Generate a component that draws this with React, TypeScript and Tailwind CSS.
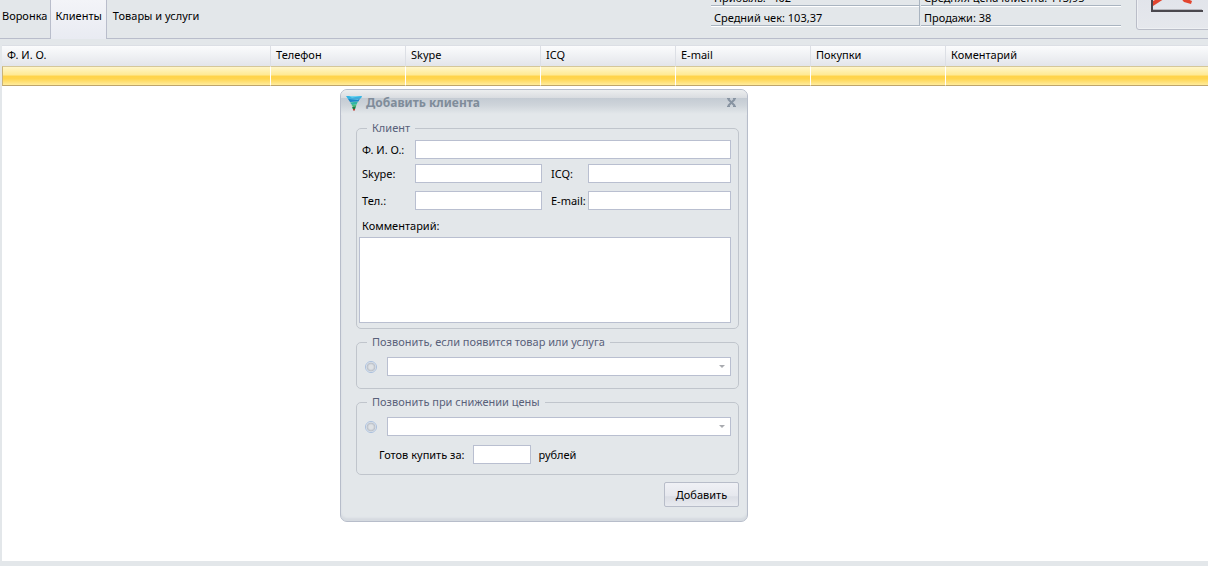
import { useState } from "react";
import type { ReactNode } from "react";

const tabs = ["Воронка", "Клиенты", "Товары и услуги"];

const columns = ["Ф. И. О.", "Телефон", "Skype", "ICQ", "E-mail", "Покупки", "Коментарий"];

const stats = [
  ["Прибыль: -402", "Средняя цена клиента: 113,95"],
  ["Средний чек: 103,37", "Продажи: 38"],
];

const inputClass = "h-[19px] min-w-0 border border-[#b9bfd0] bg-white px-1 outline-none";

function FunnelLogo() {
  return (
    <svg width="16" height="16" viewBox="0 0 16 16" aria-hidden="true">
      <path d="M0 1h16l-1 2.500L2 4z" fill="#35b4e2" />
      <path d="M3 1.200h12l-9 1.300z" fill="#8adcf2" />
      <path d="M2 4l12-.5-1.500 3L4 7z" fill="#1c86c8" />
      <path d="M3 4.800 13 4l-1 1z" fill="#5cc4e6" />
      <path d="M4 7.500l8-1-1.500 3L6 10z" fill="#2fb5a5" />
      <path d="M5.500 10.200 10.500 9.500 10 11.500l-3 .5z" fill="#46c07a" />
      <path d="M6 12.200l4-1-1 3H7z" fill="#1f7d45" />
      <path d="M7 14h2v1.500H7z" fill="#c0392f" />
    </svg>
  );
}

function ChartIcon() {
  return (
    <svg width="54" height="54" viewBox="0 0 54 54" aria-hidden="true">
      <path d="M3 51.500h49" stroke="#b5b6bc" />
      <path d="M2 0v53h51" fill="none" stroke="#4b484e" strokeWidth="2" />
      <path d="M3 43 17 36v3L3 48z" fill="#e2452f" />
      <path d="M28 37l14 6-1 3-7-2z" fill="#e2452f" />
    </svg>
  );
}

function Group({ title, children }: { title: string; children: ReactNode }) {
  return (
    <fieldset className="min-w-0 rounded-[5px] border border-[#c0c5cc]">
      <legend className="ml-[10px] px-[5px] leading-[14px] text-[#59617a]">{title}</legend>
      {children}
    </fieldset>
  );
}

function ProductPicker({ name, label }: { name: string; label: string }) {
  return (
    <div className="flex items-center gap-[10px] pl-2 pr-[7px] pt-2">
      <input
        type="radio"
        name="reminder"
        value={name}
        aria-label={label}
        className="size-3 shrink-0 appearance-none rounded-full border border-[#a9bfdd] bg-[radial-gradient(circle,#dfe2e5_0_2px,#b9bfc8_4px,#f1f4f7_5px)]"
      />
      <div className="relative flex grow">
        <select aria-label={label} className={`${inputClass} w-full appearance-none`}>
          <option></option>
        </select>
        <svg
          className="pointer-events-none absolute right-[6px] top-2"
          width="6"
          height="3"
          viewBox="0 0 6 3"
          aria-hidden="true"
        >
          <path d="M0 0h6L3 3z" fill="#a9abb0" />
        </svg>
      </div>
    </div>
  );
}

function AddClientDialog() {
  return (
    <section
      role="dialog"
      aria-labelledby="dialog-title"
      className="absolute left-[340px] top-[89px] w-[408px] rounded-[7px] border border-[#b7bdca] bg-[#e3e7ea] shadow-[inset_0_-3px_2px_#d5dae0]"
    >
      <header className="flex h-[25px] items-center gap-1 rounded-t-[6px] bg-[linear-gradient(#eceeef_0,#d9dce0_8px,#c4cbd3_8px,#ced4da_15px,#e3e7ea_24px)] pl-[5px] pr-[10px]">
        <FunnelLogo />
        <h2 id="dialog-title" className="grow text-[12px] leading-[14px] font-bold text-[#7f8c9a]">
          Добавить клиента
        </h2>
        <button type="button" aria-label="Закрыть">
          <svg width="11" height="9" viewBox="0 0 11 9" aria-hidden="true">
            <path d="M2 1l7 7M9 1L2 8" stroke="#8793a1" strokeWidth="2" />
            <path d="M1 .5h3M7 .5h3M1 8.500h3M7 8.500h3" stroke="#8793a1" />
          </svg>
        </button>
      </header>

      <form className="flex flex-col px-2 pb-[14px] pl-[15px] pt-[6px]" onSubmit={(e) => e.preventDefault()}>
        <div className="flex flex-col gap-[6px]">
          <Group title="Клиент">
            <div className="grid grid-cols-[53px_127px_46px_1fr] items-center gap-y-[5px] pl-[5px] pr-[7px] pt-[5px]">
              <label htmlFor="name">Ф. И. О.:</label>
              <input id="name" className={`${inputClass} col-span-3`} />
              <label htmlFor="skype">Skype:</label>
              <input id="skype" className={inputClass} />
              <label htmlFor="icq" className="pl-[9px]">ICQ:</label>
              <input id="icq" className={inputClass} />
            </div>
            <div className="grid grid-cols-[53px_127px_46px_1fr] items-center pl-[5px] pr-[7px] pt-2">
              <label htmlFor="phone">Тел.:</label>
              <input id="phone" className={inputClass} />
              <label htmlFor="email" className="pl-[9px]">E-mail:</label>
              <input id="email" className={inputClass} />
            </div>
            <div className="flex flex-col gap-1 pb-[5px] pl-[2px] pr-[7px] pt-[9px]">
              <label htmlFor="comment" className="pl-[3px]">Комментарий:</label>
              <textarea
                id="comment"
                className="h-[86px] resize-none border border-[#b9bfd0] bg-white px-1 outline-none"
              />
            </div>
          </Group>

          <Group title="Позвонить, если появится товар или услуга">
            <div className="pb-3">
              <ProductPicker name="available" label="Товар или услуга" />
            </div>
          </Group>

          <Group title="Позвонить при снижении цены">
            <ProductPicker name="price" label="Товар со сниженной ценой" />
            <div className="flex items-center gap-2 pb-[10px] pl-[22px] pt-[9px]">
              <label htmlFor="price">Готов купить за:</label>
              <input id="price" className={`${inputClass} w-[58px]`} />
              <span>рублей</span>
            </div>
          </Group>
        </div>

        <button
          type="submit"
          className="mt-[7px] h-[25px] w-[75px] self-end rounded-[2px] border border-[#b8bdc9] bg-[linear-gradient(#f0f1f5,#e6e8ee_55%,#dbdee5_60%,#e8eaef)]"
        >
          Добавить
        </button>
      </form>
    </section>
  );
}

export default function App() {
  const [activeTab, setActiveTab] = useState("Клиенты");

  return (
    <div className="relative flex h-screen flex-col overflow-hidden bg-[#e3e7ea] font-['Noto_Sans',sans-serif] text-[11px] leading-[14px] text-black">
      <header className="flex h-[39px] shrink-0 items-end">
        <nav className="flex self-stretch">
          {tabs.map((tab) => (
            <button
              key={tab}
              type="button"
              onClick={() => setActiveTab(tab)}
              className={
                tab === activeTab
                  ? "border-x border-[#b9bdcb] bg-linear-to-b from-[#f3f4f8] to-[#e9ebf2] px-1 pb-2"
                  : "border-b border-[#b9bdcb] pb-[6px] pl-[2px] pr-[3px] last:pl-[6px]"
              }
            >
              {tab}
            </button>
          ))}
        </nav>

        <div className="flex grow items-end justify-end gap-[15px] self-stretch overflow-hidden border-b border-[#b9bdcb]">
          <dl className="pb-3">
            {stats.map(([left, right]) => (
              <div key={left} className="flex h-5">
                <dt className="w-[209px] border-b border-r border-[#a9b4c0] pl-[3px] pt-[5px] shadow-[0_1px_#fff]">
                  {left}
                </dt>
                <dd className="ml-px w-[200px] border-b border-[#a9b4c0] pl-[3px] pt-[5px] shadow-[0_1px_#fff]">
                  {right}
                </dd>
              </div>
            ))}
          </dl>
          <button
            type="button"
            aria-label="График"
            className="-mr-2 mb-2 w-20 shrink-0 rounded-[3px] border border-[#babdc8] bg-linear-to-b from-[#dcdfe7] to-[#e6e8ed] pb-[17px] pl-[13px] shadow-[inset_0_0_0_1px_#eef0f3]"
          >
            <ChartIcon />
          </button>
        </div>
      </header>

      <main className="mb-[5px] ml-[2px] mt-[6px] grow bg-white">
        <table className="w-full table-fixed border-separate border-spacing-0">
          <colgroup>
            <col className="w-[269px]" />
            <col className="w-[135px]" />
            <col className="w-[135px]" />
            <col className="w-[135px]" />
            <col className="w-[135px]" />
            <col className="w-[135px]" />
            <col />
          </colgroup>
          <thead>
            <tr>
              {columns.map((column) => (
                <th
                  key={column}
                  className="h-[21px] border-r border-t border-[#dcdfe5] bg-linear-to-b from-[#fbfcfd] to-[#e3e5ea] px-[5px] pb-[2px] text-left font-normal last:border-r-0"
                >
                  {column}
                </th>
              ))}
            </tr>
          </thead>
          <tbody>
            <tr>
              {columns.map((column) => (
                <td
                  key={column}
                  className="h-5 border-b border-r border-t border-b-[#bfa56b] border-r-white border-t-[#d5c798] bg-[linear-gradient(#fff6c9,#ffe992_45%,#ffd34a_50%,#ffd54f_65%,#ffec9c)] first:border-l first:border-l-[#cbb477] last:border-r-0"
                />
              ))}
            </tr>
          </tbody>
        </table>
      </main>

      <AddClientDialog />
    </div>
  );
}
